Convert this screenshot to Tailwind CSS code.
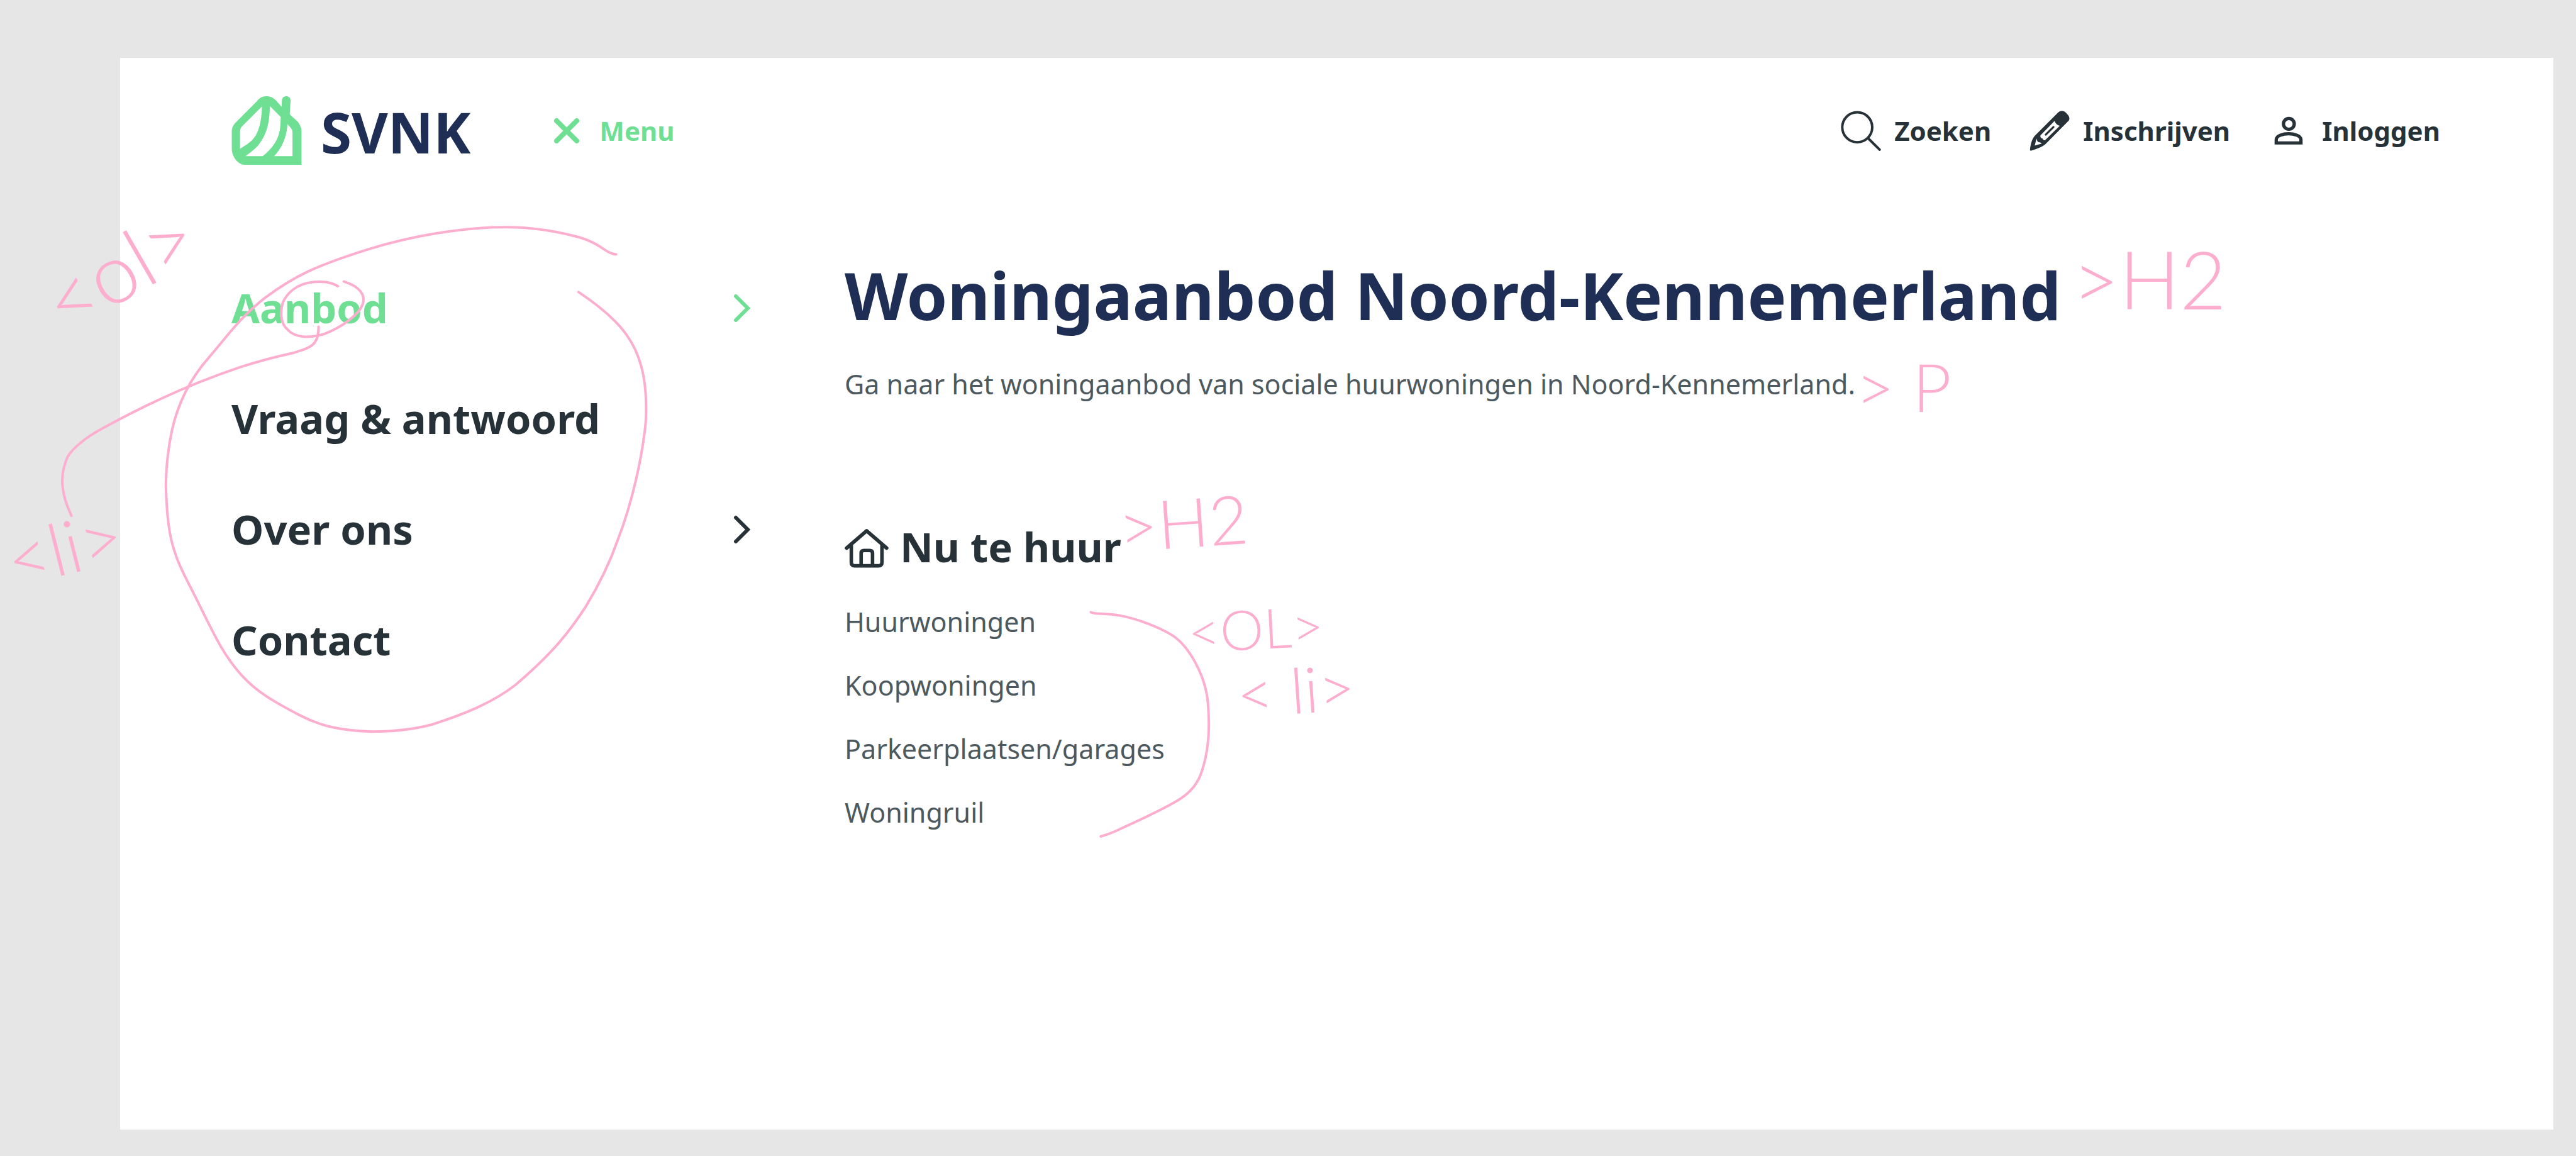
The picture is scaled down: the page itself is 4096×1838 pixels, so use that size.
<!DOCTYPE html>
<html lang="nl">
<head>
<meta charset="utf-8">
<meta name="viewport" content="width=device-width, initial-scale=1">
<title>SVNK – Menu</title>
<script src="https://cdn.jsdelivr.net/npm/@tailwindcss/browser@4"></script>
</head>
<body class="relative flex min-h-screen flex-col bg-[#e6e6e6] pt-[92px] pr-[36px] pb-[42px] pl-[191px] font-['Noto_Sans',sans-serif] text-[#263238]">
<div class="flex-1 bg-white pr-[180px] pl-[177px]">
  <header class="flex items-center pt-[61px] text-[42px] font-bold leading-[64px]">
    <a href="#" class="flex items-center gap-[30px]" aria-label="SVNK">
      <svg class="h-[109px] w-[112px]" viewBox="0 0 178 175" fill="#6fdf94" fill-rule="evenodd" aria-hidden="true">
        <path d="M88 0C77 0 70 5 64 13L8 69C2 76 0 82 0 89V133C0 143 2 149 6 156C11 165 18 171 26 174Q31 175 39 175H178V89C178 81 174 73 169 66C163 59 155 53 148 46L150 11C150 4 145 0 139 0C133 0 128 4 128 11L127 27L113 11C106 4 99 0 88 0ZM77 26L26 77C22 81 21 86 21 93V134C40 123 50 115 57 106C68 92 76 66 77 26ZM97 25L125 53C124 72 124 83 121 93C116 115 102 134 79 153H35C46 145 57 137 66 127C86 103 97 75 97 25ZM142 71L151 81Q155 86 155 93V153H108C117 144 124 133 129 123C136 108 141 92 142 71Z"/>
      </svg>
      <span class="pt-1 font-['Open_Sans',sans-serif] text-[89px] leading-[90px] font-bold text-[#1e2e55]">SVNK</span>
    </a>
    <button type="button" class="ml-[132px] flex items-center gap-[31px] text-[#6fdf94]">
      <svg class="size-[42px]" viewBox="0 0 42 42" fill="none" stroke="currentColor" stroke-width="8" stroke-linecap="round" aria-hidden="true"><path d="M5 5L37 37M37 5L5 37"/></svg>
      Menu
    </button>
    <nav class="ml-auto flex items-center gap-[61px]" aria-label="Account">
      <a href="#" class="flex items-center gap-[21px]">
        <svg class="size-[64px]" viewBox="42 86 306 306" fill="none" stroke="currentColor" stroke-width="19" stroke-linecap="round" aria-hidden="true"><circle cx="167" cy="212" r="114"/><path d="M248 294L337 382"/></svg>
        Zoeken
      </a>
      <a href="#" class="flex items-center gap-[21px]">
        <svg class="size-[64px]" viewBox="48 87 308 308" fill="currentColor" aria-hidden="true">
          <path d="M52 386C55 355 65 305 88 280L265 103C284 84 308 84 326 102L342 119C356 135 357 153 345 167L170 343C148 364 100 380 62 392C54 394 51 392 52 386Z"/>
          <path fill="#fff" d="M240 165C246 185 260 198 280 203L168 312C160 316 148 308 148 300C136 298 128 288 132 276ZM102 300C106 316 110 326 118 328C128 328 134 332 142 338L88 354Z"/>
          <path d="M172 270L232 212" stroke="currentColor" stroke-width="15" stroke-linecap="round"/>
        </svg>
        Inschrijven
      </a>
      <a href="#" class="flex items-center gap-[21px]">
        <svg class="size-[64px]" viewBox="30 33 306 306" fill="none" stroke="currentColor" stroke-width="25" aria-hidden="true"><circle cx="185" cy="133" r="41"/><path d="M89 278V252C89 222 145 208 183 208S277 222 277 252V278Z"/></svg>
        Inloggen
      </a>
    </nav>
  </header>

  <div class="grid grid-cols-[825px_1fr] gap-x-[150px] pt-[140px]">
    <nav aria-label="Hoofdmenu">
      <ol class="text-[65px] font-bold">
        <li><a href="#" class="flex h-[176px] items-center justify-between text-[#6fdf94]">Aanbod
          <svg class="h-[46px] w-[28px]" viewBox="0 0 28 46" fill="none" stroke="currentColor" stroke-width="6" stroke-linecap="round" aria-hidden="true"><path d="M5 4L24 23L5 42"/></svg></a></li>
        <li><a href="#" class="flex h-[176px] items-center">Vraag &amp; antwoord</a></li>
        <li><a href="#" class="flex h-[176px] items-center justify-between">Over ons
          <svg class="h-[46px] w-[28px]" viewBox="0 0 28 46" fill="none" stroke="currentColor" stroke-width="6" stroke-linecap="round" aria-hidden="true"><path d="M5 4L24 23L5 42"/></svg></a></li>
        <li><a href="#" class="flex h-[176px] items-center">Contact</a></li>
      </ol>
    </nav>
    <main class="pt-[7px] text-[43px] text-[#4c595e]">
      <h2 class="text-[104px] leading-[120px] font-bold text-[#1e2e55]">Woningaanbod Noord-Kennemerland</h2>
      <p class="mt-[50px] leading-[64px]">Ga naar het woningaanbod van sociale huurwoningen in Noord-Kennemerland.</p>
      <h2 class="mt-[186px] flex items-center gap-[18px] text-[65px] leading-[80px] font-bold text-[#263238]">
        <svg class="mt-1 h-[63px] w-[70px]" viewBox="0 0 112 100" fill="none" stroke="currentColor" stroke-width="9" stroke-linecap="round" stroke-linejoin="round" aria-hidden="true"><path d="M5 50L56 6L107 50M17 42V86Q17 95 26 95H86Q95 95 95 86V42M42 94V63Q42 56 49 56H64Q71 56 71 63V94"/></svg>
        Nu te huur
      </h2>
      <ol class="mt-[29px] leading-[101px]">
        <li><a href="#">Huurwoningen</a></li>
        <li><a href="#">Koopwoningen</a></li>
        <li><a href="#">Parkeerplaatsen/garages</a></li>
        <li><a href="#">Woningruil</a></li>
      </ol>
    </main>
  </div>
</div>

<!-- Pink review notes drawn over the page -->
<svg class="pointer-events-none absolute inset-0 h-full w-full" viewBox="0 0 6530 2931" preserveAspectRatio="xMinYMin" fill="none">
  <g stroke="#fdaecf" stroke-width="4" stroke-linecap="round" stroke-linejoin="round">
    <g transform="translate(0 520) scale(1.0842 .8929)">
      <path vector-effect="non-scaling-stroke" d="M1441 140C1415 138 1405 105 1340 87C1290 72 1240 62 1180 63C1080 63 960 88 860 126C740 172 690 200 620 263C560 320 530 375 487 435C440 500 415 570 402 640C390 710 388 760 388 800C390 880 395 940 410 990C420 1030 440 1070 460 1120C495 1205 520 1275 565 1335C600 1382 640 1410 700 1448C750 1480 800 1493 870 1495C930 1495 970 1488 1010 1475C1080 1448 1150 1415 1205 1363C1290 1275 1330 1215 1370 1140C1400 1080 1425 1020 1445 950C1480 840 1500 720 1508 640C1513 600 1511 540 1508 510C1503 460 1490 410 1465 368C1440 325 1400 285 1353 247"/>
      <path vector-effect="non-scaling-stroke" d="M790 230C770 217 755 217 735 218C690 222 670 255 662 275C655 300 655 335 672 353C690 378 725 378 758 366C800 347 840 310 848 282C856 255 840 230 804 217"/>
      <path vector-effect="non-scaling-stroke" d="M745 345C746 400 725 405 685 420C640 432 600 445 560 461C460 502 350 560 240 634C200 660 170 690 158 715C138 770 143 820 167 882"/>
    </g>
    <g transform="translate(2100 1230) scale(.8929 .5931)">
      <path vector-effect="non-scaling-stroke" d="M746 543C755 553 780 546 830 558C880 572 940 608 975 640C1010 672 1040 740 1060 815C1077 880 1080 930 1081 1020C1081 1110 1072 1180 1057 1240C1045 1285 1025 1320 990 1350C940 1395 850 1455 815 1480C800 1490 790 1495 774 1502"/>
    </g>
  </g>
  <g fill="#fdaecf" class="font-['Lato',sans-serif] font-light">
    <text font-size="210" transform="translate(165 850) rotate(-30)">&lt;ol&gt;</text>
    <text font-size="185" transform="translate(36 1490) rotate(-14)">&lt;li&gt;</text>
    <text font-size="204" x="5255" y="785">&gt;H2</text>
    <text font-size="170" x="4705" y="1045">&gt; P</text>
    <text font-size="172" transform="translate(2840 1400) rotate(-4)">&gt;H2</text>
    <text font-size="140" transform="translate(3015 1655) rotate(-3)">&lt;OL&gt;</text>
    <text font-size="160" transform="translate(3140 1820) rotate(-4)">&lt; li&gt;</text>
  </g>
</svg>
</body>
</html>
